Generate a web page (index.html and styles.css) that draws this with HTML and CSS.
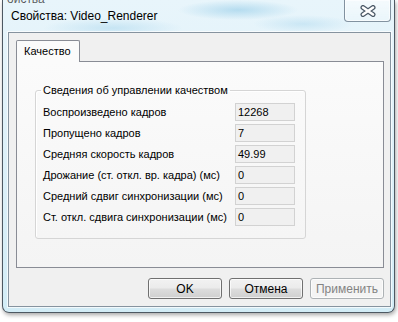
FILE: index.html
```html
<!DOCTYPE html>
<html lang="ru">
<head>
  <meta charset="UTF-8">
  <title>Свойства: Video_Renderer</title>
  <link rel="stylesheet" href="styles.css">
</head>
<body>
  <div class="window">
    <div class="titlebar">
      <span class="behind">ойства</span>
      <span class="title">Свойства: Video_Renderer</span>
      <button class="close" type="button" aria-label="Закрыть">
        <svg width="16" height="12" viewBox="0 0 16 12">
          <path d="M3 2.5 L13 9.5 M13 2.5 L3 9.5" stroke="#4a5866" stroke-width="5" stroke-linecap="round"/>
          <path d="M3 2.5 L13 9.5 M13 2.5 L3 9.5" stroke="#ffffff" stroke-width="2.6" stroke-linecap="round"/>
        </svg>
      </button>
    </div>

    <div class="client">
      <div class="tabs">
        <div class="tab">Качество</div>
      </div>

      <div class="page">
        <fieldset class="group">
          <legend>Сведения об управлении качеством</legend>
          <div class="row"><span class="label">Воспроизведено кадров</span><span class="value">12268</span></div>
          <div class="row"><span class="label">Пропущено кадров</span><span class="value">7</span></div>
          <div class="row"><span class="label">Средняя скорость кадров</span><span class="value">49.99</span></div>
          <div class="row"><span class="label">Дрожание (ст. откл. вр. кадра) (мс)</span><span class="value">0</span></div>
          <div class="row"><span class="label">Средний сдвиг синхронизации (мс)</span><span class="value">0</span></div>
          <div class="row"><span class="label">Ст. откл. сдвига синхронизации (мс)</span><span class="value">0</span></div>
        </fieldset>
      </div>

      <div class="buttons">
        <button class="button" type="button">OK</button>
        <button class="button" type="button">Отмена</button>
        <button class="button" type="button" disabled>Применить</button>
      </div>
    </div>
  </div>
</body>
</html>
```

FILE: styles.css
```css
/* Windows 7 style property dialog */
* {
  margin: 0;
  padding: 0;
  box-sizing: border-box;
}

body {
  width: 398px;
  height: 322px;
  overflow: hidden;
  background-color: #ffffff;
  font-family: "Liberation Sans", Arial, sans-serif;
  font-size: 11px;
  color: #000;
}

.window {
  margin-left: 2px;
  width: 393px;
  height: 313px;
  border: 1px solid #4d5862;
  border-top: none;
  border-radius: 0 0 7px 7px;
  box-shadow: 1px 2px 4px rgba(0, 0, 0, 0.35);
  background:
    radial-gradient(ellipse 60px 10px at 235px 10px, rgba(140, 200, 230, 0.55), transparent),
    radial-gradient(ellipse 70px 10px at 110px 28px, rgba(160, 210, 235, 0.45), transparent),
    radial-gradient(ellipse 50px 9px at 300px 24px, rgba(160, 210, 235, 0.4), transparent),
    linear-gradient(180deg, #e8f5fb 0%, #dff1f9 40%, #d2ecf6 100%);
  display: flex;
  flex-direction: column;
}

.titlebar {
  position: relative;
  height: 32px;
  display: flex;
  align-items: flex-start;
  padding-left: 8px;
}

.behind {
  position: absolute;
  top: -8px;
  left: 4px;
  font-size: 12px;
  color: rgba(40, 40, 40, 0.75);
}

.title {
  margin-top: 9px;
  font-size: 12px;
  line-height: 14px;
  color: #000;
}

.close {
  margin-left: auto;
  margin-right: 3px;
  width: 47px;
  height: 22px;
  border: 1px solid rgba(70, 90, 110, 0.65);
  border-top: none;
  border-radius: 0 0 4px 4px;
  background: linear-gradient(180deg, rgba(255, 255, 255, 0.55), rgba(255, 255, 255, 0.15));
  box-shadow: inset 0 0 0 1px rgba(255, 255, 255, 0.6);
  display: flex;
  align-items: center;
  justify-content: center;
}

.client {
  margin: 0 3px 0 5px;
  height: 275px;
  border: 1px solid #86939f;
  box-shadow: 0 0 0 1px rgba(255, 255, 255, 0.7);
  background-color: #f0f0f0;
  padding: 7px 6px 7px 7px;
}

.tabs {
  display: flex;
  height: 21px;
}

.tab {
  position: relative;
  z-index: 1;
  width: 64px;
  height: 22px;
  border: 1px solid #898c95;
  border-bottom: none;
  border-radius: 2px 2px 0 0;
  background-color: #fbfbfb;
  padding-left: 7px;
  line-height: 20px;
}

.page {
  height: 207px;
  border: 1px solid #898c95;
  background: linear-gradient(180deg, #fbfbfb 0%, #f4f4f4 100%);
}

.group {
  margin: 22px 0 0 18px;
  width: 271px;
  border: 1px solid #d5d5d5;
  border-radius: 3px;
  box-shadow: inset 1px 1px 0 #ffffff;
  padding: 6px 0 12px 7px;
}

.group legend {
  margin-left: -2px;
  padding: 0 2px;
  line-height: 13px;
}

.row {
  display: flex;
  align-items: center;
  height: 18px;
  margin-bottom: 3px;
}

.row:last-child {
  margin-bottom: 0;
}

.label {
  width: 192px;
  white-space: nowrap;
}

.value {
  width: 60px;
  height: 18px;
  border: 1px solid #d2d2d2;
  background-color: #f0f0f0;
  padding-left: 2px;
  line-height: 16px;
}

.buttons {
  margin-top: 10px;
  display: flex;
  justify-content: flex-end;
  gap: 7px;
}

.button {
  width: 74px;
  height: 21px;
  border: 1px solid #707070;
  border-radius: 3px;
  background: linear-gradient(180deg, #f2f2f2 0%, #ebebeb 48%, #dddddd 52%, #cfcfcf 100%);
  box-shadow: inset 0 0 0 1px rgba(255, 255, 255, 0.7);
  font-family: "Liberation Sans", Arial, sans-serif;
  font-size: 12px;
  color: #000;
}

.button:disabled {
  border-color: #adb2b5;
  background: #f4f4f4;
  color: #838383;
}
```
